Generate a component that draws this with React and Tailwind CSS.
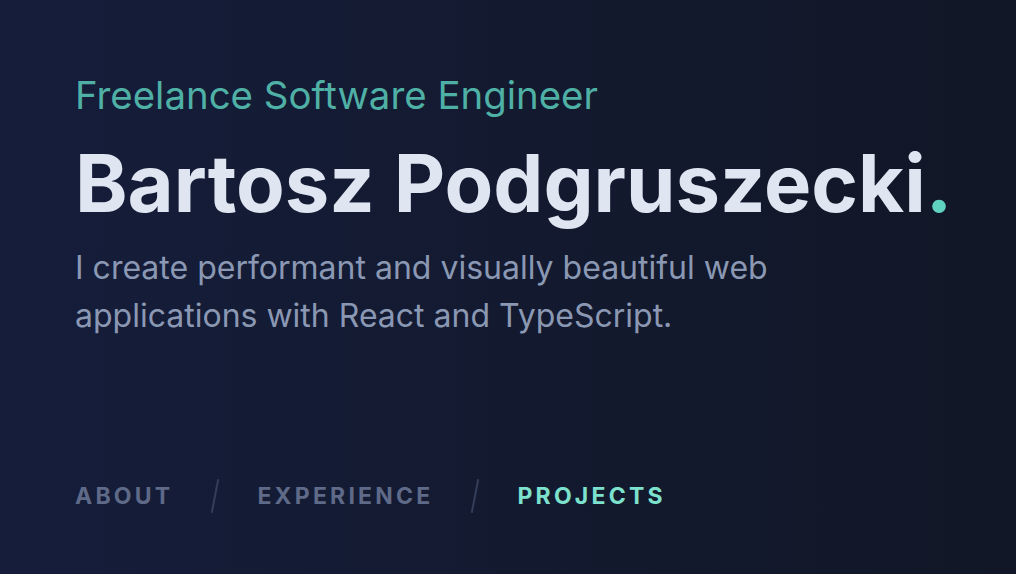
import React from 'react';

export default function App() {
    const links = ['About', 'Experience', 'Projects'];
    const active = 'Projects';

    return (
        <div className="w-[1016px] h-[574px] overflow-hidden bg-gradient-to-r from-[#151d3b] via-[#131a30] to-[#111726] font-['Inter',sans-serif]">
            <div className="pl-[75px] pt-[70px] flex flex-col">
                <h2 className="text-[38.4px] leading-[50px] text-[#4fb0a5] font-normal">Freelance Software Engineer</h2>
                <h1 className="mt-[18px] text-[79.5px] leading-[90px] font-bold text-[#dfe5f1]">
                    Bartosz Podgruszecki<span className="text-[#5fd3bf]">.</span>
                </h1>
                <p className="mt-[16px] w-[730px] text-[32px] leading-[48px] text-[#8b98b3]">
                    I create performant and visually beautiful web applications with React and TypeScript.
                </p>

                {/* Nav */}
                <nav className="mt-[139px] flex items-center gap-[41px]">
                    {links.map((l, idx) => (
                        <React.Fragment key={l}>
                            {idx > 0 && <span className="w-[2px] h-[34px] bg-[#343e58] rotate-[11deg]"></span>}
                            <span className={l === active ? 'text-[23px] font-bold uppercase tracking-[0.14em] text-[#7de2cd]' : 'text-[23px] font-bold uppercase tracking-[0.14em] text-[#5e6a88]'}>
                                {l}
                            </span>
                        </React.Fragment>
                    ))}
                </nav>
            </div>
        </div>
    );
}
